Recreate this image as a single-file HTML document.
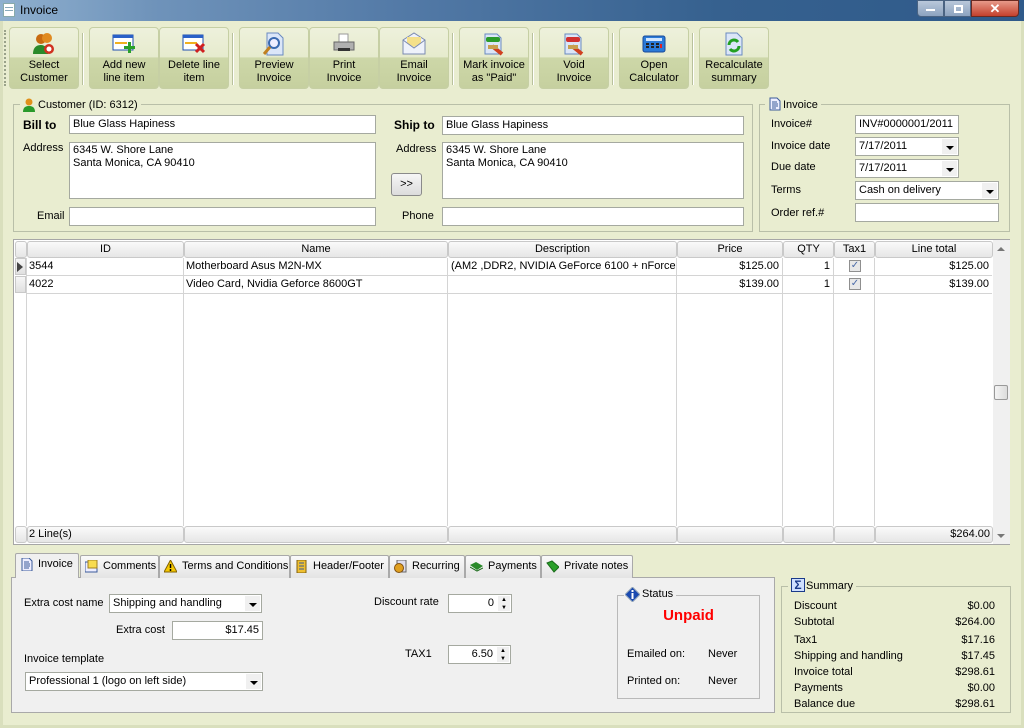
<!DOCTYPE html>
<html><head><meta charset="utf-8"><style>
*{box-sizing:border-box}
body{margin:0;width:1024px;height:728px;overflow:hidden;background:#e9edd0;font-family:"Liberation Sans",sans-serif;font-size:11px;color:#000;position:relative}
.a{position:absolute}
.title{left:0;top:0;width:1024px;height:21px;background:linear-gradient(90deg,#8fb0cf 0%,#6f93ba 15%,#5279a6 40%,#36618f 70%,#2f5a8a 100%)}
.frame{left:0;top:21px;width:1024px;height:707px;border:3px solid #d9dfbd;border-top:none;background:#e9edd0}
.btn{top:27px;width:70px;height:62px;border:1px solid #c6cfa4;border-radius:4px;background:linear-gradient(#eef1dc 0,#e6ebcd 48%,#cdd7a8 50%,#c6d09f 100%);text-align:center;font-size:11px;line-height:13px;padding-top:31px}
.sep{top:33px;width:2px;height:52px;border-left:1px solid #b9c19c;border-right:1px solid #fff}
.ico{position:absolute;left:22px;top:4px;width:24px;height:24px}
.grp{border:1px solid #b9bfa8}
.lg{background:#e9edd0;padding:0 3px}
.inp{background:#fff;border:1px solid #a5a9a0;padding:1px 3px;line-height:15px;white-space:nowrap;overflow:hidden}
.dd{position:absolute;right:1px;top:1px;bottom:1px;width:15px;background:#f0f0f0}
.dd:after{content:"";position:absolute;left:4px;top:7px;border:4px solid transparent;border-top:4px solid #000;border-bottom:none}
.grid{left:13px;top:239px;width:997px;height:306px;border:1px solid #a6a6a6;background:#fff}
.hc{position:absolute;top:1px;height:17px;background:linear-gradient(#fafafa,#e6e6e6);border:1px solid #c9c9c9;border-radius:3px;text-align:center;line-height:15px}
.vl{position:absolute;top:18px;width:1px;height:268px;background:#d4d4d4}
.hl{position:absolute;left:12px;width:966px;height:1px;background:#d4d4d4}
.cell{position:absolute;height:17px;line-height:17px;white-space:nowrap;overflow:hidden}
.r{text-align:right}
.tab{top:555px;height:23px;border:1px solid #a9a9a9;border-bottom:none;background:linear-gradient(#fafafa,#e4e4e4);line-height:20px;padding-left:22px;font-size:11px;border-radius:2px 2px 0 0}
.ti{position:absolute;left:4px;top:4px;width:13px;height:13px}
.spin{position:absolute;right:1px;top:1px;width:12px;bottom:1px;background:#f0f0f0;font-size:6px;line-height:8px;text-align:center}
</style></head><body>
<div class="a title">
 <div class="a" style="left:3px;top:3px;width:12px;height:14px;background:#fff;border:1px solid #8aa"><div style="margin:3px 1px;height:6px;background:repeating-linear-gradient(#8ab 0 1px,#fff 1px 3px)"></div></div>
 <div class="a" style="left:20px;top:3px;font-size:12px;color:#000">Invoice</div>
 <div class="a" style="left:917px;top:0;width:27px;height:17px;border:1px solid #4a6382;border-radius:0 0 0 4px;background:linear-gradient(#b9c8da,#8ca3c0)"><div style="margin:8px 8px 0;height:2px;background:#fff"></div></div>
 <div class="a" style="left:944px;top:0;width:27px;height:17px;border:1px solid #4a6382;background:linear-gradient(#b9c8da,#8ca3c0)"><div style="margin:4px 9px;width:9px;height:8px;border:2px solid #fff"></div></div>
 <div class="a" style="left:971px;top:0;width:48px;height:17px;border:1px solid #6a2a22;border-radius:0 0 4px 0;background:linear-gradient(#e79a8a,#c4402c);color:#fff;text-align:center;font-weight:bold;font-size:13px;line-height:15px">✕</div>
</div>
<div class="a frame"></div>
<div class="a" style="left:4px;top:30px;width:2px;height:56px;border-left:2px dotted #9aa28a"></div>

<div class="a btn" style="left:9px"><svg class="ico" viewBox="0 0 24 24"><circle cx="9" cy="7" r="5" fill="#c86a10"/><circle cx="15" cy="6" r="5" fill="#e08a20"/><path d="M1 22c0-7 4-9 8-9s7 3 7 9z" fill="#2a8a2a"/><circle cx="17" cy="17" r="5" fill="#d03020"/><circle cx="17" cy="17" r="2.5" fill="#fff"/></svg>Select<br>Customer</div>
<div class="a sep" style="left:82px"></div>
<div class="a btn" style="left:89px"><svg class="ico" viewBox="0 0 24 24"><rect x="1" y="3" width="20" height="15" fill="#fff" stroke="#2050b0"/><rect x="1" y="3" width="20" height="3" fill="#2a60c8"/><rect x="3" y="10" width="12" height="2" fill="#f0b020"/><path d="M16 10h3v4h4v3h-4v4h-3v-4h-4v-3h4z" fill="#2aa02a"/></svg>Add new<br>line item</div>
<div class="a btn" style="left:159px"><svg class="ico" viewBox="0 0 24 24"><rect x="1" y="3" width="20" height="15" fill="#fff" stroke="#2050b0"/><rect x="1" y="3" width="20" height="3" fill="#2a60c8"/><rect x="3" y="10" width="12" height="2" fill="#f0b020"/><path d="M14 12l8 8M22 12l-8 8" stroke="#d02020" stroke-width="3"/></svg>Delete line<br>item</div>
<div class="a sep" style="left:232px"></div>
<div class="a btn" style="left:239px"><svg class="ico" viewBox="0 0 24 24"><path d="M5 1h11l5 5v17H5z" fill="#dbe6f8" stroke="#6a8ac0"/><circle cx="12" cy="11" r="5" fill="#eef" stroke="#3a6ab0" stroke-width="2"/><path d="M8 15l-6 7" stroke="#c08020" stroke-width="3"/></svg>Preview<br>Invoice</div>
<div class="a btn" style="left:309px"><svg class="ico" viewBox="0 0 24 24"><path d="M7 2h9v8H7z" fill="#fff" stroke="#999"/><path d="M2 10h20v8H2z" fill="#b0b0b0" stroke="#666"/><rect x="6" y="16" width="12" height="3" fill="#333"/></svg>Print<br>Invoice</div>
<div class="a btn" style="left:379px"><svg class="ico" viewBox="0 0 24 24"><path d="M1 8l11-7 11 7v14H1z" fill="#eef2fb" stroke="#7a8ab0"/><path d="M5 5h14v6l-7 4-7-4z" fill="#f4e08a"/><path d="M1 8l11 8 11-8" fill="none" stroke="#7a8ab0"/></svg>Email<br>Invoice</div>
<div class="a sep" style="left:452px"></div>
<div class="a btn" style="left:459px"><svg class="ico" viewBox="0 0 24 24"><path d="M3 2h12l4 4v16H3z" fill="#dbe6f8" stroke="#6a8ac0"/><rect x="4" y="5" width="14" height="5" rx="2" fill="#2a9a2a"/><path d="M10 14l10 8" stroke="#d04020" stroke-width="4"/><rect x="6" y="13" width="10" height="4" fill="#c8a050"/></svg>Mark invoice<br>as "Paid"</div>
<div class="a sep" style="left:532px"></div>
<div class="a btn" style="left:539px"><svg class="ico" viewBox="0 0 24 24"><path d="M3 2h12l4 4v16H3z" fill="#dbe6f8" stroke="#6a8ac0"/><rect x="4" y="5" width="14" height="5" rx="2" fill="#d03030"/><path d="M10 14l10 8" stroke="#d04020" stroke-width="4"/><rect x="6" y="13" width="10" height="4" fill="#c8a050"/></svg>Void<br>Invoice</div>
<div class="a sep" style="left:612px"></div>
<div class="a btn" style="left:619px"><svg class="ico" viewBox="0 0 24 24"><rect x="1" y="4" width="22" height="16" rx="2" fill="#2a7ad8" stroke="#1a4a98"/><rect x="4" y="6" width="16" height="3" fill="#cfe4ff"/><path d="M4 12h3M9 12h3M14 12h3M4 15h3M9 15h3M14 15h3" stroke="#222" stroke-width="2"/><path d="M19 12v4" stroke="#e02020" stroke-width="2"/></svg>Open<br>Calculator</div>
<div class="a sep" style="left:692px"></div>
<div class="a btn" style="left:699px"><svg class="ico" viewBox="0 0 24 24"><path d="M4 1h11l5 5v17H4z" fill="#dbe6f8" stroke="#6a8ac0"/><path d="M7 13a5 5 0 0 1 9-3M17 14a5 5 0 0 1-9 3" fill="none" stroke="#22a022" stroke-width="3"/></svg>Recalculate<br>summary</div>

<div class="a grp" style="left:13px;top:104px;width:740px;height:128px"></div>
<div class="a lg" style="left:20px;top:98px;height:14px;line-height:14px;padding-left:18px">Customer (ID: 6312)</div>
<svg class="a" style="left:23px;top:98px" width="12" height="14" viewBox="0 0 12 14"><circle cx="6" cy="4" r="3.5" fill="#e0901a"/><path d="M0 14c0-5 3-6 6-6s6 1 6 6z" fill="#2a9a2a"/></svg>
<div class="a" style="left:23px;top:118px;font-weight:bold;font-size:12px">Bill to</div>
<div class="a inp" style="left:69px;top:115px;width:307px;height:19px">Blue Glass Hapiness</div>
<div class="a" style="left:23px;top:142px">Address</div>
<div class="a inp" style="left:69px;top:142px;width:307px;height:57px;white-space:normal;line-height:13px">6345 W. Shore Lane<br>Santa Monica, CA 90410</div>
<div class="a" style="left:37px;top:210px">Email</div>
<div class="a inp" style="left:69px;top:207px;width:307px;height:19px"></div>
<div class="a" style="left:394px;top:118px;font-weight:bold;font-size:12px">Ship to</div>
<div class="a inp" style="left:442px;top:116px;width:302px;height:19px">Blue Glass Hapiness</div>
<div class="a" style="left:396px;top:143px">Address</div>
<div class="a inp" style="left:442px;top:142px;width:302px;height:57px;white-space:normal;line-height:13px">6345 W. Shore Lane<br>Santa Monica, CA 90410</div>
<div class="a" style="left:391px;top:173px;width:31px;height:23px;border:1px solid #8a8a8a;border-radius:3px;background:linear-gradient(#f6f6f6,#dcdcdc);text-align:center;line-height:20px">&gt;&gt;</div>
<div class="a" style="left:402px;top:210px">Phone</div>
<div class="a inp" style="left:442px;top:207px;width:302px;height:19px"></div>

<div class="a grp" style="left:759px;top:104px;width:251px;height:128px"></div>
<div class="a lg" style="left:765px;top:98px;height:14px;line-height:14px;padding-left:18px">Invoice</div>
<svg class="a" style="left:769px;top:97px" width="12" height="14" viewBox="0 0 12 14"><path d="M1 1h7l3 3v9H1z" fill="#eef" stroke="#3a5a9a"/><path d="M3 5h5M3 7h6M3 9h6M3 11h4" stroke="#3a5a9a"/></svg>
<div class="a" style="left:771px;top:118px">Invoice#</div>
<div class="a inp" style="left:855px;top:115px;width:104px;height:19px">INV#0000001/2011</div>
<div class="a" style="left:771px;top:140px">Invoice date</div>
<div class="a inp" style="left:855px;top:137px;width:104px;height:19px">7/17/2011<span class="dd"></span></div>
<div class="a" style="left:771px;top:161px">Due date</div>
<div class="a inp" style="left:855px;top:159px;width:104px;height:19px">7/17/2011<span class="dd"></span></div>
<div class="a" style="left:771px;top:184px">Terms</div>
<div class="a inp" style="left:855px;top:181px;width:144px;height:19px">Cash on delivery<span class="dd"></span></div>
<div class="a" style="left:771px;top:207px">Order ref.#</div>
<div class="a inp" style="left:855px;top:203px;width:144px;height:19px"></div>

<div class="a grid">
 <div class="hc" style="left:1px;width:12px"></div>
 <div class="hc" style="left:13px;width:157px">ID</div>
 <div class="hc" style="left:170px;width:264px">Name</div>
 <div class="hc" style="left:434px;width:229px">Description</div>
 <div class="hc" style="left:663px;width:106px">Price</div>
 <div class="hc" style="left:769px;width:51px">QTY</div>
 <div class="hc" style="left:820px;width:41px">Tax1</div>
 <div class="hc" style="left:861px;width:118px">Line total</div>
 <div class="vl" style="left:12px"></div><div class="vl" style="left:169px"></div><div class="vl" style="left:433px"></div><div class="vl" style="left:662px"></div><div class="vl" style="left:768px"></div><div class="vl" style="left:819px"></div><div class="vl" style="left:860px"></div>
 <div class="hl" style="top:35px"></div><div class="hl" style="top:53px"></div>
 <div class="a" style="left:1px;top:18px;width:11px;height:17px;background:linear-gradient(#f6f6f6,#e0e0e0);border:1px solid #c9c9c9"></div>
 <div class="a" style="left:3px;top:22px;border:5px solid transparent;border-left:6px solid #444;border-right:none"></div>
 <div class="a" style="left:1px;top:36px;width:11px;height:17px;background:linear-gradient(#f6f6f6,#e0e0e0);border:1px solid #c9c9c9"></div>
 <div class="cell" style="left:15px;top:18px">3544</div>
 <div class="cell" style="left:172px;top:18px">Motherboard Asus M2N-MX</div>
 <div class="cell" style="left:437px;top:18px;width:225px">(AM2 ,DDR2, NVIDIA GeForce 6100 + nForce 430)</div>
 <div class="cell r" style="left:663px;top:18px;width:102px">$125.00</div>
 <div class="cell r" style="left:769px;top:18px;width:47px">1</div>
 <div class="cell r" style="left:861px;top:18px;width:114px">$125.00</div>
 <div class="cell" style="left:15px;top:36px">4022</div>
 <div class="cell" style="left:172px;top:36px">Video Card, Nvidia Geforce 8600GT</div>
 <div class="cell r" style="left:663px;top:36px;width:102px">$139.00</div>
 <div class="cell r" style="left:769px;top:36px;width:47px">1</div>
 <div class="cell r" style="left:861px;top:36px;width:114px">$139.00</div>
 <div class="a" style="left:835px;top:20px;width:12px;height:12px;border:1px solid #8f8f8f;background:#e8e8e8;color:#4a6aa8;font-size:10px;line-height:10px;text-align:center">✓</div>
 <div class="a" style="left:835px;top:38px;width:12px;height:12px;border:1px solid #8f8f8f;background:#e8e8e8;color:#4a6aa8;font-size:10px;line-height:10px;text-align:center">✓</div>
 <div class="hc" style="left:1px;top:286px;width:12px"></div>
 <div class="hc" style="left:13px;top:286px;width:157px;text-align:left;padding-left:1px">2 Line(s)</div>
 <div class="hc" style="left:170px;top:286px;width:264px"></div>
 <div class="hc" style="left:434px;top:286px;width:229px"></div>
 <div class="hc" style="left:663px;top:286px;width:106px"></div>
 <div class="hc" style="left:769px;top:286px;width:51px"></div>
 <div class="hc" style="left:820px;top:286px;width:41px"></div>
 <div class="hc" style="left:861px;top:286px;width:118px;text-align:right;padding-right:2px">$264.00</div>
 <div class="a" style="left:979px;top:0;width:17px;height:304px;background:#f0f0f0"></div>
 <div class="a" style="left:983px;top:7px;border:4px solid transparent;border-bottom:4px solid #777;border-top:none"></div>
 <div class="a" style="left:983px;top:294px;border:4px solid transparent;border-top:4px solid #777;border-bottom:none"></div>
 <div class="a" style="left:980px;top:145px;width:14px;height:15px;border:1px solid #999;border-radius:2px;background:linear-gradient(90deg,#f4f4f4,#dcdcdc)"></div>
</div>

<div class="a" style="left:11px;top:577px;width:764px;height:136px;background:#f0f0f0;border:1px solid #a9a9a9"></div>
<div class="a tab" style="left:15px;top:553px;width:64px;height:25px;background:#f0f0f0"><svg class="ti" viewBox="0 0 13 13"><path d="M2 0h7l3 3v10H2z" fill="#eef" stroke="#3a5a9a"/><path d="M4 4h5M4 6h6M4 8h6M4 10h5" stroke="#3a5a9a"/></svg>Invoice</div>
<div class="a tab" style="left:80px;width:79px"><svg class="ti" viewBox="0 0 13 13"><rect x="0" y="2" width="12" height="10" fill="#eef" stroke="#3a5a9a"/><rect x="3" y="0" width="9" height="8" fill="#f8dc50" stroke="#a08020"/></svg>Comments</div>
<div class="a tab" style="left:159px;width:131px"><svg class="ti" viewBox="0 0 13 13"><path d="M6.5 0l6.5 12H0z" fill="#f6c800" stroke="#806000"/><path d="M6.5 4v4M6.5 9v2" stroke="#000" stroke-width="1.5"/></svg>Terms and Conditions</div>
<div class="a tab" style="left:290px;width:99px"><svg class="ti" viewBox="0 0 13 13"><rect x="2" y="0" width="9" height="13" fill="#f0c030" stroke="#806010"/><path d="M4 3h5M4 6h5M4 9h5" stroke="#3a5a9a"/></svg>Header/Footer</div>
<div class="a tab" style="left:389px;width:76px"><svg class="ti" viewBox="0 0 13 13"><rect x="3" y="0" width="9" height="12" fill="#dde" stroke="#666"/><circle cx="5" cy="8" r="4.5" fill="#e0a020" stroke="#805010"/></svg>Recurring</div>
<div class="a tab" style="left:465px;width:76px"><svg class="ti" viewBox="0 0 13 13"><path d="M0 5l6-3 7 4-6 4z" fill="#2a8a2a"/><path d="M0 7l7 4 6-3" stroke="#1a6a1a" fill="none"/></svg>Payments</div>
<div class="a tab" style="left:541px;width:92px"><svg class="ti" viewBox="0 0 13 13"><path d="M1 3l5-2 7 6-5 5z" fill="#2aa02a" stroke="#1a6a1a"/></svg>Private notes</div>

<div class="a" style="left:24px;top:597px">Extra cost name</div>
<div class="a inp" style="left:109px;top:594px;width:153px;height:19px">Shipping and handling<span class="dd"></span></div>
<div class="a" style="left:116px;top:624px">Extra cost</div>
<div class="a inp r" style="left:172px;top:621px;width:91px;height:19px">$17.45</div>
<div class="a" style="left:24px;top:653px">Invoice template</div>
<div class="a inp" style="left:25px;top:672px;width:238px;height:19px">Professional 1 (logo on left side)<span class="dd"></span></div>
<div class="a" style="left:374px;top:596px">Discount rate</div>
<div class="a inp r" style="left:448px;top:594px;width:64px;height:19px;padding-right:17px">0<span class="spin">▲<br>▼</span></div>
<div class="a" style="left:405px;top:648px">TAX1</div>
<div class="a inp r" style="left:448px;top:645px;width:63px;height:19px;padding-right:17px">6.50<span class="spin">▲<br>▼</span></div>

<div class="a" style="left:617px;top:595px;width:143px;height:104px;border:1px solid #b9b9b9"></div>
<div class="a" style="left:624px;top:587px;background:#f0f0f0;padding:0 3px 0 18px;line-height:15px">Status</div>
<svg class="a" style="left:625px;top:587px" width="15" height="15" viewBox="0 0 15 15"><path d="M7.5 0l7.5 7.5-7.5 7.5L0 7.5z" fill="#1a4ab0" stroke="#9ab"/><rect x="6.5" y="3" width="2" height="2" fill="#fff"/><rect x="6.5" y="6" width="2" height="6" fill="#fff"/></svg>
<div class="a" style="left:617px;top:607px;width:143px;text-align:center;color:#f00;font-weight:bold;font-size:15px">Unpaid</div>
<div class="a" style="left:627px;top:648px">Emailed on:</div><div class="a" style="left:708px;top:648px">Never</div>
<div class="a" style="left:627px;top:675px">Printed on:</div><div class="a" style="left:708px;top:675px">Never</div>

<div class="a grp" style="left:781px;top:586px;width:230px;height:127px"></div>
<div class="a lg" style="left:788px;top:578px;line-height:16px;padding-left:18px">Summary</div>
<div class="a" style="left:791px;top:578px;width:14px;height:14px;border:1px solid #1a3a8a;background:#cfe0ff;color:#1a3a8a;font-weight:bold;text-align:center;line-height:12px;font-size:12px">Σ</div>
<div class="a" style="left:794px;top:598px;line-height:16px">Discount<br>Subtotal<br><div style="height:2px"></div>Tax1<br>Shipping and handling<br>Invoice total<br>Payments<br>Balance due</div>
<div class="a r" style="left:900px;top:598px;width:95px;line-height:16px">$0.00<br>$264.00<br><div style="height:2px"></div>$17.16<br>$17.45<br>$298.61<br>$0.00<br>$298.61</div>
</body></html>
